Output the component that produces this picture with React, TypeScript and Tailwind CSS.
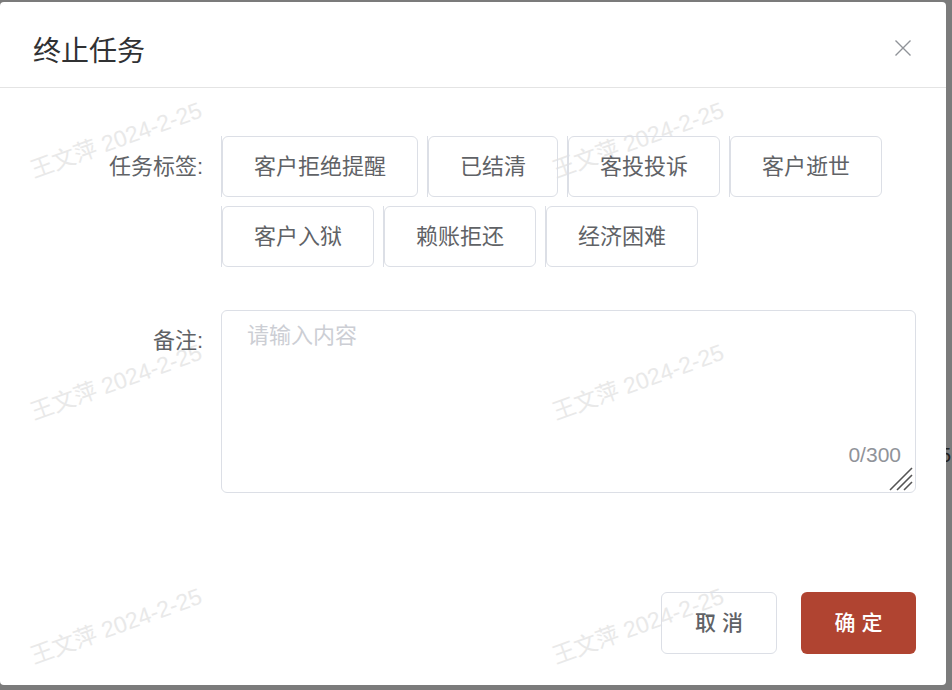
import React from "react";

const tagsRow1 = ["客户拒绝提醒", "已结清", "客投投诉", "客户逝世"];
const tagsRow2 = ["客户入狱", "赖账拒还", "经济困难"];

const marks = [
  { x: 116, y: 140 },
  { x: 638, y: 140 },
  { x: 116, y: 382 },
  { x: 638, y: 382 },
  { x: 116, y: 626 },
  { x: 638, y: 626 },
];

function Tag({ label }: { label: string }) {
  return (
    <div className="flex border-l border-[#dcdfe6]">
      <div className="flex h-[61px] items-center rounded-[6px] border border-[#dcdfe6] px-[31px] text-[22px] leading-none text-[#606266]">
        {label}
      </div>
    </div>
  );
}

export default function App() {
  return (
    <div
      className="relative h-[690px] w-[952px] overflow-hidden bg-[#7b7b7b]"
      style={{ fontFamily: '"Liberation Sans", "Noto Sans CJK SC", sans-serif' }}
    >
      <span className="absolute left-[940px] top-[440px] text-[20px] text-[#222]">5</span>

      <div className="relative z-10 mt-[2px] flex h-[683px] w-[946px] flex-col rounded-[4px] bg-white">
        {/* watermarks */}
        <div className="pointer-events-none absolute inset-0 overflow-hidden">
          {marks.map((m, i) => (
            <span
              key={i}
              className="absolute flex h-[28px] w-[196px] -rotate-[20deg] items-center justify-center whitespace-nowrap text-[23px] text-[#e9e9e9]"
              style={{ left: m.x - 98, top: m.y - 16 }}
            >
              王文萍 2024-2-25
            </span>
          ))}
        </div>

        <div className="relative flex items-start justify-between border-b border-[#e4e4e4] pb-[17px] pl-[33px] pr-[34px] pt-[32px]">
          <h1 className="text-[28px] leading-[36px] text-[#303133]">终止任务</h1>
          <svg width="18" height="18" viewBox="0 0 18 18" className="mt-[5px]">
            <path d="M1.5 1.5 L16.5 16.5 M16.5 1.5 L1.5 16.5" stroke="#909399" strokeWidth="1.4" />
          </svg>
        </div>

        <div className="relative flex flex-1 flex-col pt-[48px]">
          <div className="flex">
            <div className="flex h-[61px] w-[205px] items-center justify-end pr-[2px] text-[22px] text-[#606266]">
              任务标签:
            </div>
            <div className="ml-[16px] flex flex-col gap-y-[9px]">
              <div className="flex gap-x-[9px]">
                {tagsRow1.map((t) => (
                  <Tag key={t} label={t} />
                ))}
              </div>
              <div className="flex gap-x-[9px]">
                {tagsRow2.map((t) => (
                  <Tag key={t} label={t} />
                ))}
              </div>
            </div>
          </div>

          <div className="mt-[43px] flex">
            <div className="flex h-[62px] w-[205px] justify-end pr-[2px] pt-[16px] text-[22px] leading-[30px] text-[#606266]">
              备注:
            </div>
            <div className="relative ml-[16px] h-[183px] w-[695px] rounded-[6px] border border-[#dcdfe6]">
              <div className="pl-[25px] pt-[11px] text-[22px] leading-[28px] text-[#ccced4]">请输入内容</div>
              <span className="absolute bottom-[27px] right-[14px] text-[21px] leading-none text-[#909399]">
                0/300
              </span>
              <svg width="26" height="26" viewBox="0 0 26 26" className="absolute bottom-[1px] right-[2px]">
                <path d="M3 25 L25 3 M10 25 L25 10 M17 25 L25 17" stroke="#555" strokeWidth="1.6" />
              </svg>
            </div>
          </div>

          <div className="mt-auto flex justify-end gap-[24px] pb-[31px] pr-[30px]">
            <button className="flex h-[62px] w-[116px] items-center justify-center rounded-[6px] border border-[#dcdfe6] bg-transparent text-[21px] font-medium text-[#606266]">
              取 消
            </button>
            <button className="flex h-[62px] w-[115px] items-center justify-center rounded-[6px] bg-[#b04431] text-[21px] font-medium text-white">
              确 定
            </button>
          </div>
        </div>
      </div>
    </div>
  );
}
